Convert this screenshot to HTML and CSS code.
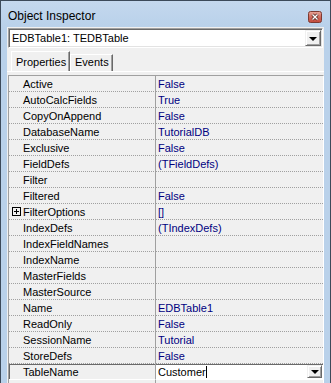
FILE: index.html
```html
<!DOCTYPE html>
<html lang="en">
<head>
    <meta charset="UTF-8">
    <title>Object Inspector</title>
    <link rel="stylesheet" href="styles.css">
</head>
<body>
    <div class="window">
        <div class="titlebar">
            <span class="title">Object Inspector</span>
            <span class="close-button">
                <svg width="14" height="12" viewBox="0 0 14 12">
                    <defs>
                        <linearGradient id="closeFill" x1="0" y1="0" x2="0" y2="1">
                            <stop offset="0" stop-color="#e8a99c"/>
                            <stop offset="0.5" stop-color="#d06a5c"/>
                            <stop offset="1" stop-color="#c24a3c"/>
                        </linearGradient>
                    </defs>
                    <rect x="0.5" y="0.5" width="13" height="11" rx="2" fill="url(#closeFill)" stroke="#7d3a32"/>
                    <path d="M4.5 3.5 L9.5 8.5 M9.5 3.5 L4.5 8.5" stroke="#5a2a24" stroke-width="3"/>
                    <path d="M4.5 3.5 L9.5 8.5 M9.5 3.5 L4.5 8.5" stroke="#ffffff" stroke-width="1.3"/>
                </svg>
            </span>
        </div>

        <div class="client">
            <div class="combo">
                <span class="combo-text">EDBTable1: TEDBTable</span>
                <span class="drop-button"><span class="arrow"></span></span>
            </div>

            <div class="tabs">
                <div class="tab active">Properties</div>
                <div class="tab">Events</div>
            </div>

            <div class="sheet">
                <div class="grid">
                    <div class="row"><div class="name">Active</div><div class="value">False</div></div>
                    <div class="row"><div class="name">AutoCalcFields</div><div class="value">True</div></div>
                    <div class="row"><div class="name">CopyOnAppend</div><div class="value">False</div></div>
                    <div class="row"><div class="name">DatabaseName</div><div class="value">TutorialDB</div></div>
                    <div class="row"><div class="name">Exclusive</div><div class="value">False</div></div>
                    <div class="row"><div class="name">FieldDefs</div><div class="value">(TFieldDefs)</div></div>
                    <div class="row"><div class="name">Filter</div><div class="value"></div></div>
                    <div class="row"><div class="name">Filtered</div><div class="value">False</div></div>
                    <div class="row"><div class="name"><span class="expander"></span>FilterOptions</div><div class="value">[]</div></div>
                    <div class="row"><div class="name">IndexDefs</div><div class="value">(TIndexDefs)</div></div>
                    <div class="row"><div class="name">IndexFieldNames</div><div class="value"></div></div>
                    <div class="row"><div class="name">IndexName</div><div class="value"></div></div>
                    <div class="row"><div class="name">MasterFields</div><div class="value"></div></div>
                    <div class="row"><div class="name">MasterSource</div><div class="value"></div></div>
                    <div class="row"><div class="name">Name</div><div class="value">EDBTable1</div></div>
                    <div class="row"><div class="name">ReadOnly</div><div class="value">False</div></div>
                    <div class="row"><div class="name">SessionName</div><div class="value">Tutorial</div></div>
                    <div class="row"><div class="name">StoreDefs</div><div class="value">False</div></div>
                    <div class="row selected">
                        <div class="name">TableName</div>
                        <div class="value">
                            <span class="editor-text">Customer</span><span class="caret"></span>
                            <span class="cell-drop"><span class="arrow"></span></span>
                        </div>
                    </div>
                    <div class="row"><div class="name"></div><div class="value"></div></div>
                </div>
            </div>
        </div>
    </div>
</body>
</html>
```

FILE: styles.css
```css
html, body {
    margin: 0;
    padding: 0;
}

body {
    background: #f0f0f0;
    font-family: "Liberation Sans", Arial, sans-serif;
    font-size: 11px;
}

.window {
    width: 331px;
    height: 383px;
    box-sizing: border-box;
    border: 1px solid #3c4a5a;
    border-bottom: none;
    background: #b9d1ea;
    display: flex;
    flex-direction: column;
    overflow: hidden;
}

.titlebar {
    height: 26px;
    flex: none;
    display: flex;
    align-items: flex-start;
    padding: 0 8px 0 7px;
    background: linear-gradient(#c4d8ee, #b9d1ea);
}

.title {
    margin-top: 8px;
    font-size: 12px;
    line-height: 14px;
    color: #000;
}

.close-button {
    margin-left: auto;
    margin-top: 10px;
    width: 14px;
    height: 12px;
}

.close-button svg {
    display: block;
}

.client {
    flex: 1;
    margin: 0 6px;
    background: #f0f0f0;
    display: flex;
    flex-direction: column;
}

/* component selector */
.combo {
    height: 20px;
    margin: 1px 1px 0 1px;
    box-sizing: border-box;
    border: 1px solid;
    border-color: #a0a0a0 #ffffff #ffffff #a0a0a0;
    box-shadow: inset 1px 1px 0 #696969, inset -1px -1px 0 #e3e3e3;
    background: #fff;
    display: flex;
    align-items: flex-start;
    padding: 1px 1px 1px 3px;
}

.combo-text {
    line-height: 16px;
    color: #000;
}

.drop-button {
    margin-left: auto;
    width: 16px;
    height: 16px;
    box-sizing: border-box;
    background: #f0f0f0;
    border: 1px solid;
    border-color: #f0f0f0 #696969 #696969 #f0f0f0;
    box-shadow: inset 1px 1px 0 #fff, inset -1px -1px 0 #a0a0a0;
    display: flex;
    align-items: center;
    justify-content: center;
}

.arrow {
    width: 0;
    height: 0;
    border-left: 4px solid transparent;
    border-right: 4px solid transparent;
    border-top: 4px solid #000;
    margin-top: 1px;
}

/* tabs */
.tabs {
    height: 23px;
    flex: none;
    display: flex;
    align-items: flex-end;
    padding-left: 4px;
}

.tab {
    height: 17px;
    box-sizing: border-box;
    padding: 1px 3px 0 4px;
    line-height: 13px;
    border: 1px solid;
    border-bottom: none;
    border-color: #fff #696969 #fff #fff;
    box-shadow: inset -1px 0 0 #a0a0a0;
    color: #000;
}

.tab.active {
    height: 20px;
    padding-top: 4px;
    width: 59px;
}

.sheet {
    flex: 1;
    border-top: 1px solid #fff;
    padding: 3px 0 0 1px;
    display: flex;
    flex-direction: column;
}

/* property grid */
.grid {
    flex: 1;
    border-top: 1px solid #a0a0a0;
    border-left: 1px solid #a0a0a0;
    border-right: 1px solid #fff;
}

.row {
    display: flex;
    height: 16px;
}

.name,
.value {
    box-sizing: border-box;
    height: 16px;
    padding-top: 2px;
    line-height: 13px;
    border-bottom: 1px dotted #a0a0a0;
    white-space: nowrap;
}

.name {
    width: 147px;
    flex: none;
    padding-left: 14px;
    border-right: 1px solid #a0a0a0;
    color: #000;
    position: relative;
}

.value {
    flex: 1;
    padding-left: 2px;
    color: #000080;
    display: flex;
}

.expander {
    position: absolute;
    left: 3px;
    top: 3px;
    width: 9px;
    height: 9px;
    box-sizing: border-box;
    border: 1px solid #000;
    background:
        linear-gradient(#000, #000) center / 5px 1px no-repeat,
        linear-gradient(#000, #000) center / 1px 5px no-repeat,
        #f0f0f0;
}

.row.selected .name {
    border-bottom: 1px solid #fff;
    box-shadow: inset 1px 1px 0 #696969;
}

.row.selected .value {
    background: #fff;
    color: #000;
    border-bottom: 1px solid #fff;
    box-shadow: inset 0 1px 0 #696969;
    padding-right: 1px;
}

.caret {
    width: 1px;
    height: 12px;
    background: #000;
    margin-top: 0;
}

.cell-drop {
    margin-left: auto;
    margin-top: -1px;
    width: 15px;
    height: 13px;
    box-sizing: border-box;
    background: #f0f0f0;
    border: 1px solid;
    border-color: #f0f0f0 #696969 #696969 #f0f0f0;
    box-shadow: inset 1px 1px 0 #fff, inset -1px -1px 0 #a0a0a0;
    display: flex;
    align-items: center;
    justify-content: center;
}
```
